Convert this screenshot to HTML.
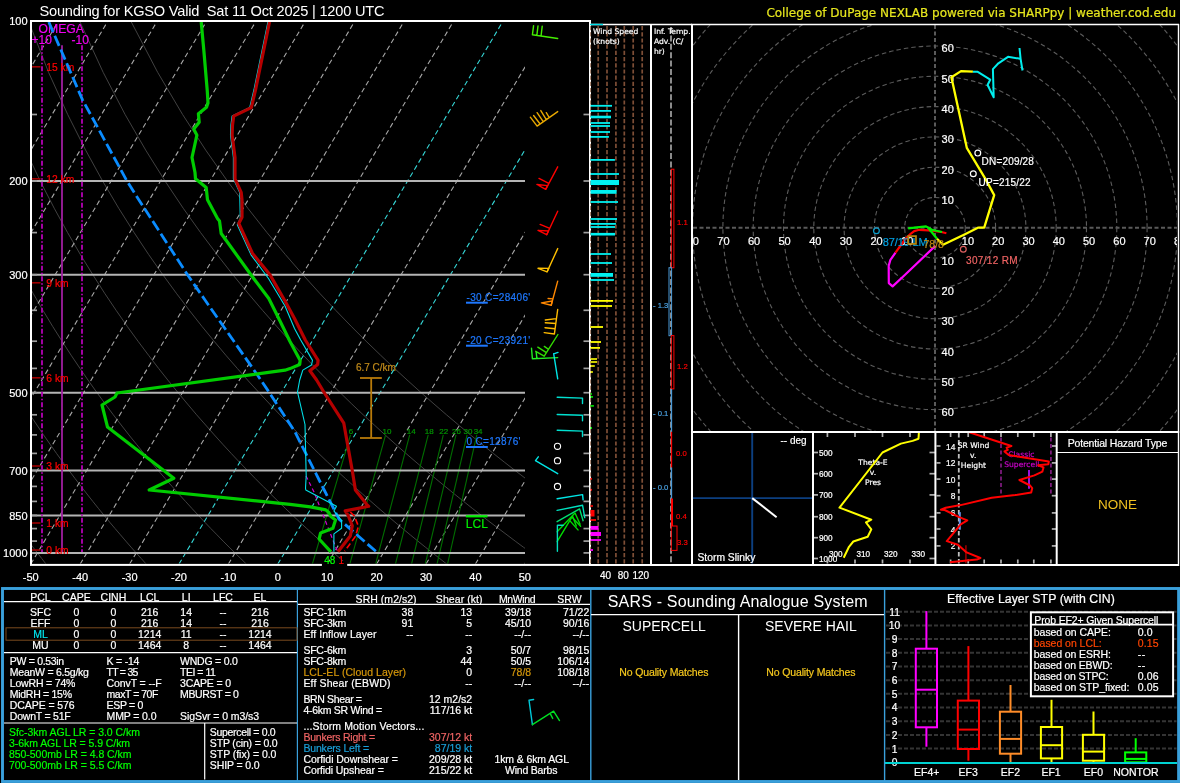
<!DOCTYPE html>
<html><head><meta charset="utf-8"><title>Sounding KGSO</title>
<style>
html,body{margin:0;padding:0;background:#000;overflow:hidden}
svg{display:block;will-change:transform}
text{font-family:"Liberation Sans",sans-serif;white-space:pre;stroke-width:0.2px}
text.dj{font-family:"DejaVu Sans",sans-serif}
</style></head><body>
<svg width="1180" height="783" viewBox="0 0 1180 783">
<rect x="0" y="0" width="1180" height="783" fill="#000"/>
<defs><clipPath id="cpS"><rect x="32" y="22" width="493" height="541.5"/></clipPath></defs>
<g clip-path="url(#cpS)">
<polyline points="46.1,564.2 41.8,558.6 37.4,552.9 32.9,547.1 28.4,541.1 23.8,534.9 19.2,528.6 14.5,522.1 9.8,515.4 4.9,508.5 0.1,501.4 -4.9,494 -9.9,486.4 -15,478.6 -20.2,470.5 -25.5,462.1 -30.9,453.4 -36.3,444.3 -41.9,434.9 -47.5,425 -53.2,414.8 -59.1,404 -65.1,392.7 -71.1,380.9 -77.3,368.4 -83.7,355.2 -90.1,341.2 -96.7,326.3 -103.5,310.3 -110.3,293.2 -117.4,274.7 -124.6,254.6 -131.9,232.6 -139.4,208.2 -146.9,181 -154.6,150.1 -162.2,114.5 -169.5,72.4 -176.3,20.8" fill="none" stroke="#484848" stroke-width="0.9" />
<polyline points="146.3,564.2 141.3,558.6 136.2,552.9 131,547.1 125.8,541.1 120.5,534.9 115.1,528.6 109.6,522.1 104.1,515.4 98.5,508.5 92.8,501.4 87,494 81.1,486.4 75.1,478.6 69,470.5 62.8,462.1 56.5,453.4 50.1,444.3 43.5,434.9 36.9,425 30,414.8 23.1,404 16,392.7 8.7,380.9 1.3,368.4 -6.3,355.2 -14.1,341.2 -22.1,326.3 -30.3,310.3 -38.7,293.2 -47.3,274.7 -56.2,254.6 -65.4,232.6 -74.8,208.2 -84.5,181 -94.5,150.1 -104.7,114.5 -115,72.4 -125.2,20.8" fill="none" stroke="#484848" stroke-width="0.9" />
<polyline points="246.5,564.2 240.8,558.6 235,552.9 229.1,547.1 223.1,541.1 217.1,534.9 210.9,528.6 204.7,522.1 198.4,515.4 192,508.5 185.5,501.4 178.8,494 172.1,486.4 165.2,478.6 158.2,470.5 151.1,462.1 143.9,453.4 136.5,444.3 128.9,434.9 121.2,425 113.3,414.8 105.3,404 97,392.7 88.6,380.9 80,368.4 71.1,355.2 62,341.2 52.6,326.3 42.9,310.3 33,293.2 22.7,274.7 12.1,254.6 1.1,232.6 -10.3,208.2 -22.2,181 -34.5,150.1 -47.2,114.5 -60.4,72.4 -74,20.8" fill="none" stroke="#484848" stroke-width="0.9" />
<polyline points="346.7,564.2 340.3,558.6 333.8,552.9 327.2,547.1 320.5,541.1 313.7,534.9 306.8,528.6 299.8,522.1 292.7,515.4 285.5,508.5 278.2,501.4 270.7,494 263.1,486.4 255.3,478.6 247.5,470.5 239.4,462.1 231.2,453.4 222.8,444.3 214.3,434.9 205.6,425 196.6,414.8 187.5,404 178.1,392.7 168.5,380.9 158.6,368.4 148.5,355.2 138,341.2 127.2,326.3 116.1,310.3 104.6,293.2 92.8,274.7 80.4,254.6 67.6,232.6 54.2,208.2 40.2,181 25.6,150.1 10.2,114.5 -5.9,72.4 -22.8,20.8" fill="none" stroke="#484848" stroke-width="0.9" />
<polyline points="446.9,564.2 439.8,558.6 432.6,552.9 425.3,547.1 417.9,541.1 410.3,534.9 402.7,528.6 394.9,522.1 387,515.4 379,508.5 370.9,501.4 362.5,494 354.1,486.4 345.5,478.6 336.7,470.5 327.7,462.1 318.6,453.4 309.2,444.3 299.7,434.9 289.9,425 279.9,414.8 269.7,404 259.1,392.7 248.3,380.9 237.3,368.4 225.8,355.2 214.1,341.2 201.9,326.3 189.3,310.3 176.3,293.2 162.8,274.7 148.7,254.6 134.1,232.6 118.7,208.2 102.6,181 85.6,150.1 67.7,114.5 48.6,72.4 28.4,20.8" fill="none" stroke="#484848" stroke-width="0.9" />
<polyline points="547,564.2 539.3,558.6 531.4,552.9 523.3,547.1 515.2,541.1 507,534.9 498.6,528.6 490,522.1 481.4,515.4 472.5,508.5 463.6,501.4 454.4,494 445.1,486.4 435.6,478.6 425.9,470.5 416,462.1 405.9,453.4 395.6,444.3 385.1,434.9 374.3,425 363.2,414.8 351.8,404 340.2,392.7 328.2,380.9 315.9,368.4 303.2,355.2 290.1,341.2 276.6,326.3 262.5,310.3 248,293.2 232.8,274.7 217.1,254.6 200.6,232.6 183.2,208.2 165,181 145.7,150.1 125.1,114.5 103.2,72.4 79.5,20.8" fill="none" stroke="#484848" stroke-width="0.9" />
<polyline points="647.2,564.2 638.8,558.6 630.2,552.9 621.4,547.1 612.6,541.1 603.6,534.9 594.4,528.6 585.1,522.1 575.7,515.4 566,508.5 556.2,501.4 546.3,494 536.1,486.4 525.7,478.6 515.1,470.5 504.3,462.1 493.3,453.4 482,444.3 470.4,434.9 458.6,425 446.5,414.8 434,404 421.2,392.7 408.1,380.9 394.5,368.4 380.6,355.2 366.1,341.2 351.2,326.3 335.7,310.3 319.6,293.2 302.9,274.7 285.4,254.6 267,232.6 247.8,208.2 227.4,181 205.7,150.1 182.6,114.5 157.7,72.4 130.7,20.8" fill="none" stroke="#484848" stroke-width="0.9" />
<line x1="-512.7" y1="564" x2="-188.5" y2="21" stroke="#a8a8a8" stroke-width="1.1" stroke-dasharray="5 3.2"/>
<line x1="-463.3" y1="564" x2="-139.1" y2="21" stroke="#a8a8a8" stroke-width="1.1" stroke-dasharray="5 3.2"/>
<line x1="-413.9" y1="564" x2="-89.7" y2="21" stroke="#a8a8a8" stroke-width="1.1" stroke-dasharray="5 3.2"/>
<line x1="-364.5" y1="564" x2="-40.3" y2="21" stroke="#a8a8a8" stroke-width="1.1" stroke-dasharray="5 3.2"/>
<line x1="-315.1" y1="564" x2="9.1" y2="21" stroke="#a8a8a8" stroke-width="1.1" stroke-dasharray="5 3.2"/>
<line x1="-265.7" y1="564" x2="58.5" y2="21" stroke="#a8a8a8" stroke-width="1.1" stroke-dasharray="5 3.2"/>
<line x1="-216.3" y1="564" x2="107.9" y2="21" stroke="#a8a8a8" stroke-width="1.1" stroke-dasharray="5 3.2"/>
<line x1="-166.9" y1="564" x2="157.3" y2="21" stroke="#a8a8a8" stroke-width="1.1" stroke-dasharray="5 3.2"/>
<line x1="-117.5" y1="564" x2="206.7" y2="21" stroke="#a8a8a8" stroke-width="1.1" stroke-dasharray="5 3.2"/>
<line x1="-68.1" y1="564" x2="256.1" y2="21" stroke="#a8a8a8" stroke-width="1.1" stroke-dasharray="5 3.2"/>
<line x1="-18.7" y1="564" x2="305.5" y2="21" stroke="#a8a8a8" stroke-width="1.1" stroke-dasharray="5 3.2"/>
<line x1="30.8" y1="564" x2="354.9" y2="21" stroke="#a8a8a8" stroke-width="1.1" stroke-dasharray="5 3.2"/>
<line x1="80.2" y1="564" x2="404.3" y2="21" stroke="#a8a8a8" stroke-width="1.1" stroke-dasharray="5 3.2"/>
<line x1="129.6" y1="564" x2="453.7" y2="21" stroke="#a8a8a8" stroke-width="1.1" stroke-dasharray="5 3.2"/>
<line x1="179" y1="564" x2="503.1" y2="21" stroke="#35d6d6" stroke-width="1.1" stroke-dasharray="5 3.2"/>
<line x1="228.4" y1="564" x2="552.5" y2="21" stroke="#a8a8a8" stroke-width="1.1" stroke-dasharray="5 3.2"/>
<line x1="277.8" y1="564" x2="601.9" y2="21" stroke="#35d6d6" stroke-width="1.1" stroke-dasharray="5 3.2"/>
<line x1="327.2" y1="564" x2="651.3" y2="21" stroke="#a8a8a8" stroke-width="1.1" stroke-dasharray="5 3.2"/>
<line x1="376.6" y1="564" x2="700.7" y2="21" stroke="#a8a8a8" stroke-width="1.1" stroke-dasharray="5 3.2"/>
<line x1="426" y1="564" x2="750.1" y2="21" stroke="#a8a8a8" stroke-width="1.1" stroke-dasharray="5 3.2"/>
<line x1="475.4" y1="564" x2="799.5" y2="21" stroke="#a8a8a8" stroke-width="1.1" stroke-dasharray="5 3.2"/>
<line x1="524.8" y1="564" x2="848.9" y2="21" stroke="#a8a8a8" stroke-width="1.1" stroke-dasharray="5 3.2"/>
<polyline points="312.3,564.2 350.5,434.9" fill="none" stroke="#006e00" stroke-width="1.1" />
<polyline points="349.8,564.2 385.6,434.9" fill="none" stroke="#006e00" stroke-width="1.1" />
<polyline points="375.6,564.2 409.7,434.9" fill="none" stroke="#006e00" stroke-width="1.1" />
<polyline points="395.4,564.2 428.2,434.9" fill="none" stroke="#006e00" stroke-width="1.1" />
<polyline points="411.5,564.2 443.3,434.9" fill="none" stroke="#006e00" stroke-width="1.1" />
<polyline points="425.2,564.2 456,434.9" fill="none" stroke="#006e00" stroke-width="1.1" />
<polyline points="437,564.2 467.1,434.9" fill="none" stroke="#006e00" stroke-width="1.1" />
<polyline points="447.5,564.2 476.8,434.9" fill="none" stroke="#006e00" stroke-width="1.1" />
</g>
<text x="351" y="433.9" font-size="8" fill="#009600" text-anchor="middle"  stroke="#009600">6</text>
<text x="387" y="433.9" font-size="8" fill="#009600" text-anchor="middle"  stroke="#009600">10</text>
<text x="411.2" y="433.9" font-size="8" fill="#009600" text-anchor="middle"  stroke="#009600">14</text>
<text x="429.2" y="433.9" font-size="8" fill="#009600" text-anchor="middle"  stroke="#009600">18</text>
<text x="443.7" y="433.9" font-size="8" fill="#009600" text-anchor="middle"  stroke="#009600">22</text>
<text x="456.4" y="433.9" font-size="8" fill="#009600" text-anchor="middle"  stroke="#009600">26</text>
<text x="468" y="433.9" font-size="8" fill="#009600" text-anchor="middle"  stroke="#009600">30</text>
<text x="478.1" y="433.9" font-size="8" fill="#009600" text-anchor="middle"  stroke="#009600">34</text>
<line x1="31" y1="181" x2="525" y2="181" stroke="#b4b4b4" stroke-width="2" />
<line x1="31" y1="274.7" x2="525" y2="274.7" stroke="#b4b4b4" stroke-width="2" />
<line x1="31" y1="392.7" x2="525" y2="392.7" stroke="#b4b4b4" stroke-width="2" />
<line x1="31" y1="470.5" x2="525" y2="470.5" stroke="#b4b4b4" stroke-width="2" />
<line x1="31" y1="515.4" x2="525" y2="515.4" stroke="#b4b4b4" stroke-width="2" />
<line x1="31" y1="552.9" x2="525" y2="552.9" stroke="#b4b4b4" stroke-width="2" />
<line x1="31" y1="114.5" x2="37" y2="114.5" stroke="#a0a0a0" stroke-width="1.7" />
<line x1="583.5" y1="114.5" x2="589" y2="114.5" stroke="#a0a0a0" stroke-width="1.7" />
<line x1="31" y1="181" x2="37" y2="181" stroke="#a0a0a0" stroke-width="1.7" />
<line x1="583.5" y1="181" x2="589" y2="181" stroke="#a0a0a0" stroke-width="1.7" />
<line x1="31" y1="232.6" x2="37" y2="232.6" stroke="#a0a0a0" stroke-width="1.7" />
<line x1="583.5" y1="232.6" x2="589" y2="232.6" stroke="#a0a0a0" stroke-width="1.7" />
<line x1="31" y1="274.7" x2="37" y2="274.7" stroke="#a0a0a0" stroke-width="1.7" />
<line x1="583.5" y1="274.7" x2="589" y2="274.7" stroke="#a0a0a0" stroke-width="1.7" />
<line x1="31" y1="310.3" x2="37" y2="310.3" stroke="#a0a0a0" stroke-width="1.7" />
<line x1="583.5" y1="310.3" x2="589" y2="310.3" stroke="#a0a0a0" stroke-width="1.7" />
<line x1="31" y1="341.2" x2="37" y2="341.2" stroke="#a0a0a0" stroke-width="1.7" />
<line x1="583.5" y1="341.2" x2="589" y2="341.2" stroke="#a0a0a0" stroke-width="1.7" />
<line x1="31" y1="368.4" x2="37" y2="368.4" stroke="#a0a0a0" stroke-width="1.7" />
<line x1="583.5" y1="368.4" x2="589" y2="368.4" stroke="#a0a0a0" stroke-width="1.7" />
<line x1="31" y1="392.7" x2="37" y2="392.7" stroke="#a0a0a0" stroke-width="1.7" />
<line x1="583.5" y1="392.7" x2="589" y2="392.7" stroke="#a0a0a0" stroke-width="1.7" />
<line x1="31" y1="414.8" x2="37" y2="414.8" stroke="#a0a0a0" stroke-width="1.7" />
<line x1="583.5" y1="414.8" x2="589" y2="414.8" stroke="#a0a0a0" stroke-width="1.7" />
<line x1="31" y1="434.9" x2="37" y2="434.9" stroke="#a0a0a0" stroke-width="1.7" />
<line x1="583.5" y1="434.9" x2="589" y2="434.9" stroke="#a0a0a0" stroke-width="1.7" />
<line x1="31" y1="453.4" x2="37" y2="453.4" stroke="#a0a0a0" stroke-width="1.7" />
<line x1="583.5" y1="453.4" x2="589" y2="453.4" stroke="#a0a0a0" stroke-width="1.7" />
<line x1="31" y1="470.5" x2="37" y2="470.5" stroke="#a0a0a0" stroke-width="1.7" />
<line x1="583.5" y1="470.5" x2="589" y2="470.5" stroke="#a0a0a0" stroke-width="1.7" />
<line x1="31" y1="486.4" x2="37" y2="486.4" stroke="#a0a0a0" stroke-width="1.7" />
<line x1="583.5" y1="486.4" x2="589" y2="486.4" stroke="#a0a0a0" stroke-width="1.7" />
<line x1="31" y1="501.4" x2="37" y2="501.4" stroke="#a0a0a0" stroke-width="1.7" />
<line x1="583.5" y1="501.4" x2="589" y2="501.4" stroke="#a0a0a0" stroke-width="1.7" />
<line x1="31" y1="515.4" x2="37" y2="515.4" stroke="#a0a0a0" stroke-width="1.7" />
<line x1="583.5" y1="515.4" x2="589" y2="515.4" stroke="#a0a0a0" stroke-width="1.7" />
<line x1="31" y1="528.6" x2="37" y2="528.6" stroke="#a0a0a0" stroke-width="1.7" />
<line x1="583.5" y1="528.6" x2="589" y2="528.6" stroke="#a0a0a0" stroke-width="1.7" />
<line x1="31" y1="541.1" x2="37" y2="541.1" stroke="#a0a0a0" stroke-width="1.7" />
<line x1="583.5" y1="541.1" x2="589" y2="541.1" stroke="#a0a0a0" stroke-width="1.7" />
<line x1="31" y1="552.9" x2="37" y2="552.9" stroke="#a0a0a0" stroke-width="1.7" />
<line x1="583.5" y1="552.9" x2="589" y2="552.9" stroke="#a0a0a0" stroke-width="1.7" />
<text x="38.5" y="32.9" font-size="12.2" fill="#f000f0"  stroke="#f000f0">OMEGA</text>
<text x="31.5" y="44" font-size="12" fill="#f000f0"  stroke="#f000f0">+10</text>
<text x="71.5" y="44" font-size="12" fill="#f000f0"  stroke="#f000f0">-10</text>
<line x1="42" y1="45.3" x2="42" y2="552" stroke="#b400b4" stroke-width="1.8" stroke-dasharray="5 2 1.5 2"/>
<line x1="82" y1="45.3" x2="82" y2="552" stroke="#b400b4" stroke-width="1.8" stroke-dasharray="5 2 1.5 2"/>
<line x1="62" y1="45.3" x2="62" y2="552" stroke="#a01ea0" stroke-width="1.8" />
<line x1="31" y1="550" x2="40.5" y2="550" stroke="#a00000" stroke-width="1.6" />
<text x="46.3" y="553.7" font-size="10.3" fill="#ff0000"  stroke="#ff0000">0 km</text>
<line x1="31" y1="523" x2="40.5" y2="523" stroke="#a00000" stroke-width="1.6" />
<text x="46.3" y="526.7" font-size="10.3" fill="#ff0000"  stroke="#ff0000">1 km</text>
<line x1="31" y1="466" x2="40.5" y2="466" stroke="#a00000" stroke-width="1.6" />
<text x="46.3" y="469.7" font-size="10.3" fill="#ff0000"  stroke="#ff0000">3 km</text>
<line x1="31" y1="377.8" x2="40.5" y2="377.8" stroke="#a00000" stroke-width="1.6" />
<text x="46.3" y="381.5" font-size="10.3" fill="#ff0000"  stroke="#ff0000">6 km</text>
<line x1="31" y1="282.8" x2="40.5" y2="282.8" stroke="#a00000" stroke-width="1.6" />
<text x="46.3" y="286.5" font-size="10.3" fill="#ff0000"  stroke="#ff0000">9 km</text>
<line x1="31" y1="178.8" x2="40.5" y2="178.8" stroke="#a00000" stroke-width="1.6" />
<text x="46.3" y="182.5" font-size="10.3" fill="#ff0000"  stroke="#ff0000">12 km</text>
<line x1="31" y1="66.8" x2="40.5" y2="66.8" stroke="#a00000" stroke-width="1.6" />
<text x="46.3" y="70.5" font-size="10.3" fill="#ff0000"  stroke="#ff0000">15 km</text>
<polyline points="48.8,22 82.4,99.6 126.4,180 135,193.8 187.5,274.8 205,300 257.4,375 268.8,391.8 295,432 324.2,490 339,519.1 375.8,551.3" fill="none" stroke="#0a8cff" stroke-width="2.8" stroke-dasharray="11 4"/>
<polyline points="306,476 314,492 337,550.3" fill="none" stroke="#d000d0" stroke-width="1.2" stroke-dasharray="4 3"/>
<polyline points="267.9,22 253.9,90 249.7,107.6 232.1,116.1 230.9,125 230.5,135.2 233.4,157.5 233.4,178.8 239.7,192.5 240.3,218.5 237.3,224.8 251,254.8 268.5,278.5 285,306 294.5,328.5 300.7,340 312.5,360.4 311.5,365 302.8,370.1 299.7,380 297.5,392 305,424.5 306.2,475.8 305.5,488.2 305.8,490 336.5,506.3 333.9,510.9 341.6,520.6 341.6,528.3 333.9,533.9 333.9,551.8" fill="none" stroke="#00e0e8" stroke-width="1.1" stroke-linejoin="round"/>
<polyline points="201.2,22 203.8,50 207.2,90 208,103 206.5,107.3 198.4,113.8 199.2,122.2 193.8,129.1 196.9,135.2 192,157.5 195,172.5 195.5,178.8 206.2,187.5 207.5,199.8 217.5,218.5 219.5,221 221.2,233.5 250,273.5 268.8,298.5 280,321 290,341.5 300.2,360.4 299.7,364.5 290,368.6 285,370.2 117,393 115,397 102,405 107.5,427 173.8,478.2 149.2,490 290,504.3 310.4,506.9 325.8,509.9 328.8,512.5 330.9,516.6 335.5,520.1 332.9,528.3 320.6,532.9 319.1,539 330.9,551.8" fill="none" stroke="#00cc00" stroke-width="3.2" stroke-linejoin="round"/>
<polyline points="350.3,512 354.4,516 358.4,526.3 355.4,536.5 344.6,551.3" fill="none" stroke="#ff0000" stroke-width="1.6" stroke-dasharray="6 3"/>
<polyline points="269.5,22 255.5,90 251.3,107.6 233.7,116.1 232.5,125 232.1,135.2 235,157.5 235,178.8 241.2,192.5 242,200 242,217.2 238.8,223.5 252.5,253.5 270,274.8 285,301 294.5,318.5 305.3,340 318.1,360.4 317.6,364.5 309.9,370.7 316.6,380 323.8,392 343.8,423.2 352.5,472 355.4,490 366.6,504.3 368.7,506.3 345.2,510.9 348.2,515.5 352.3,525.8 350.3,536 338,551.8" fill="none" stroke="#b40000" stroke-width="3.2" stroke-linejoin="round"/>
<line x1="371.2" y1="378" x2="371.2" y2="438" stroke="#b87a0a" stroke-width="1.8" />
<line x1="360" y1="378" x2="381.8" y2="378" stroke="#b87a0a" stroke-width="1.8" />
<line x1="360" y1="438" x2="381.8" y2="438" stroke="#b87a0a" stroke-width="1.8" />
<text x="355.9" y="370.6" font-size="10" fill="#c08a1a"  stroke="#c08a1a">6.7 C/km</text>
<text x="466.5" y="301" font-size="10" fill="#1e78ff"  textLength="63.7" lengthAdjust="spacing" stroke="#1e78ff">-30 C=28406'</text>
<line x1="466" y1="302.7" x2="487.8" y2="302.7" stroke="#1e78ff" stroke-width="2" />
<text x="466.5" y="344" font-size="10" fill="#1e78ff"  textLength="63.7" lengthAdjust="spacing" stroke="#1e78ff">-20 C=23921'</text>
<line x1="466" y1="345.7" x2="487.8" y2="345.7" stroke="#1e78ff" stroke-width="2" />
<text x="466.5" y="445.3" font-size="10" fill="#1e78ff"  textLength="54" lengthAdjust="spacing" stroke="#1e78ff">0 C=12876'</text>
<line x1="466" y1="447" x2="487.8" y2="447" stroke="#1e78ff" stroke-width="2" />
<line x1="465.8" y1="516.3" x2="487.5" y2="516.3" stroke="#00ee00" stroke-width="2.2" />
<text x="465.8" y="528" font-size="12" fill="#00ee00"  stroke="#00ee00">LCL</text>
<rect x="31" y="21" width="559" height="543.9" fill="none" stroke="#fff" stroke-width="2" />
<rect x="321.9" y="561" width="25.3" height="8" fill="#000" stroke="none" stroke-width="1" />
<text x="324.2" y="564" font-size="10" fill="#00ff00"  stroke="#00ff00">48</text>
<text x="338.6" y="564" font-size="10" fill="#ff0000"  stroke="#ff0000">1</text>
<text x="27.6" y="24.6" font-size="11" fill="#fff" text-anchor="end"  stroke="#fff">100</text>
<text x="27.6" y="185.1" font-size="11" fill="#fff" text-anchor="end"  stroke="#fff">200</text>
<text x="27.6" y="278.8" font-size="11" fill="#fff" text-anchor="end"  stroke="#fff">300</text>
<text x="27.6" y="396.8" font-size="11" fill="#fff" text-anchor="end"  stroke="#fff">500</text>
<text x="27.6" y="474.6" font-size="11" fill="#fff" text-anchor="end"  stroke="#fff">700</text>
<text x="27.6" y="519.5" font-size="11" fill="#fff" text-anchor="end"  stroke="#fff">850</text>
<text x="27.6" y="557" font-size="11" fill="#fff" text-anchor="end"  stroke="#fff">1000</text>
<text x="30.8" y="581.2" font-size="11" fill="#fff" text-anchor="middle"  stroke="#fff">-50</text>
<text x="80.2" y="581.2" font-size="11" fill="#fff" text-anchor="middle"  stroke="#fff">-40</text>
<text x="129.6" y="581.2" font-size="11" fill="#fff" text-anchor="middle"  stroke="#fff">-30</text>
<text x="179" y="581.2" font-size="11" fill="#fff" text-anchor="middle"  stroke="#fff">-20</text>
<text x="228.4" y="581.2" font-size="11" fill="#fff" text-anchor="middle"  stroke="#fff">-10</text>
<text x="277.8" y="581.2" font-size="11" fill="#fff" text-anchor="middle"  stroke="#fff">0</text>
<text x="327.2" y="581.2" font-size="11" fill="#fff" text-anchor="middle"  stroke="#fff">10</text>
<text x="376.6" y="581.2" font-size="11" fill="#fff" text-anchor="middle"  stroke="#fff">20</text>
<text x="426" y="581.2" font-size="11" fill="#fff" text-anchor="middle"  stroke="#fff">30</text>
<text x="475.4" y="581.2" font-size="11" fill="#fff" text-anchor="middle"  stroke="#fff">40</text>
<text x="524.8" y="581.2" font-size="11" fill="#fff" text-anchor="middle"  stroke="#fff">50</text>
<text x="39.5" y="15.6" font-size="14.6" fill="#fff"  textLength="345" lengthAdjust="spacing">Sounding for KGSO Valid  Sat 11 Oct 2025 | 1200 UTC</text>
<text x="1176" y="17" font-size="12" fill="#e6e61e" text-anchor="end" class="dj"  stroke="#e6e61e">College of DuPage NEXLAB powered via SHARPpy | weather.cod.edu</text>
<path d="M557.7 38.5L532.4 34.8 M532.4 34.8L533.6 25.6 M536.9 35.2L538 25.9 M541.1 35.7L542.2 26.3" stroke="#44ee00" stroke-width="1.4" fill="none" stroke-linecap="round"/>
<path d="M557.7 111.6L537.1 126.1 M537.1 126.1L530.3 117.2 M540.1 124L533.6 115.5 M543.2 121.7L537.1 112.7 M546.3 119.6L540.8 110.6 M549.2 117.5L546.3 112.7" stroke="#e8a800" stroke-width="1.4" fill="none" stroke-linecap="round"/>
<path d="M557.7 166.8L545.7 189.3 M548.8 183.4L539 178.4" stroke="#ff0000" stroke-width="1.4" fill="none" stroke-linecap="round"/>
<polygon points="545.7,189.3 536.9,184.5 547.6,185.6" fill="none" stroke="#ff0000" stroke-width="1.4" stroke-linejoin="round"/>
<path d="M557.7 211.2L546.7 234.7 M549.8 228.3L540.1 224.4" stroke="#ff0000" stroke-width="1.4" fill="none" stroke-linecap="round"/>
<polygon points="546.7,234.7 538,230.4 548.5,231" fill="none" stroke="#ff0000" stroke-width="1.4" stroke-linejoin="round"/>
<path d="M557.7 248.6L547.1 271.8" stroke="#ffc000" stroke-width="1.4" fill="none" stroke-linecap="round"/>
<polygon points="547.1,271.8 538,268.3 548.8,268.4" fill="none" stroke="#ffc000" stroke-width="1.4" stroke-linejoin="round"/>
<path d="M557.7 281.1L551.2 305.2 M553 298.9L548.1 298.5" stroke="#ff8800" stroke-width="1.4" fill="none" stroke-linecap="round"/>
<polygon points="551.2,305.2 541.4,302.9 552.3,301" fill="none" stroke="#ff8800" stroke-width="1.4" stroke-linejoin="round"/>
<path d="M557.7 309.5L554.4 334 M554.4 334L544.2 332.6 M555.1 328.8L545 327.7 M555.8 323.5L545.3 322.8 M556.2 318.6L545.3 320" stroke="#ffbb00" stroke-width="1.4" fill="none" stroke-linecap="round"/>
<path d="M557.9 334.5L544.2 356.2 M544.2 356.2L535.7 351.3 M546.4 352.7L537.8 347.2 M548.5 349.3L544.3 346.4" stroke="#33dd00" stroke-width="1.4" fill="none" stroke-linecap="round"/>
<path d="M557.7 357.6L532.4 358.7 M532.4 358.7L531.5 348.2 M536.9 358.4L536.2 352.4" stroke="#22ee22" stroke-width="1.4" fill="none" stroke-linecap="round"/>
<path d="M557.7 378.8L553.7 353.8 M553.7 353.8L558 352.4" stroke="#00e5e5" stroke-width="1.4" fill="none" stroke-linecap="round"/>
<path d="M557.2 397.3L582.5 398.1 M582.5 398.1L582.5 403.5" stroke="#00e0d0" stroke-width="1.4" fill="none" stroke-linecap="round"/>
<path d="M557.2 414.5L582.5 415.3 M582.5 415.3L582.5 420.7" stroke="#00e0d0" stroke-width="1.4" fill="none" stroke-linecap="round"/>
<path d="M557.2 430.3L582.5 431.1 M582.5 431.1L582.5 436.5" stroke="#00e0d0" stroke-width="1.4" fill="none" stroke-linecap="round"/>
<path d="M557.7 473.7L535.5 460.7 M535.5 460.7L538.3 456.8" stroke="#00e5e5" stroke-width="1.4" fill="none" stroke-linecap="round"/>
<path d="M557.1 498.7L582.6 494.6 M582.6 494.6L583.1 499.9" stroke="#00e5e5" stroke-width="1.4" fill="none" stroke-linecap="round"/>
<path d="M557.1 510.4L582.6 505.3 M582.6 505.3L584.7 517.6" stroke="#00e0c0" stroke-width="1.4" fill="none" stroke-linecap="round"/>
<path d="M557.1 521.7L579.6 508.9 M579.6 508.9L583.1 520.7" stroke="#00e070" stroke-width="1.4" fill="none" stroke-linecap="round"/>
<path d="M557.1 531.7L575 513 M575 513L580.1 524.2 M572.4 515.8L576.3 526" stroke="#00dd00" stroke-width="1.4" fill="none" stroke-linecap="round"/>
<path d="M557.1 541.6L571.9 517.1 M571.9 517.1L580.6 526.3 M569.8 520.6L578 529.9" stroke="#00dd00" stroke-width="1.4" fill="none" stroke-linecap="round"/>
<path d="M557.4 551.3L557.4 525.3 M557.4 525.3L563.2 525.3" stroke="#00e0c0" stroke-width="1.4" fill="none" stroke-linecap="round"/>
<circle cx="557.5" cy="446.3" r="3.1" fill="none" stroke="#fff" stroke-width="1.1"/>
<circle cx="557.5" cy="460.7" r="3.1" fill="none" stroke="#fff" stroke-width="1.1"/>
<circle cx="557.5" cy="486.5" r="3.1" fill="none" stroke="#fff" stroke-width="1.1"/>
<line x1="598.2" y1="26" x2="598.2" y2="564" stroke="#7d4e36" stroke-width="1.7" stroke-dasharray="4.2 2"/>
<line x1="607" y1="26" x2="607" y2="564" stroke="#7d4e36" stroke-width="1.7" stroke-dasharray="4.2 2"/>
<line x1="615.9" y1="26" x2="615.9" y2="564" stroke="#7d4e36" stroke-width="1.7" stroke-dasharray="4.2 2"/>
<line x1="624.3" y1="26" x2="624.3" y2="564" stroke="#7d4e36" stroke-width="1.7" stroke-dasharray="4.2 2"/>
<line x1="633.2" y1="26" x2="633.2" y2="564" stroke="#7d4e36" stroke-width="1.7" stroke-dasharray="4.2 2"/>
<line x1="642.2" y1="26" x2="642.2" y2="564" stroke="#7d4e36" stroke-width="1.7" stroke-dasharray="4.2 2"/>
<line x1="590.6" y1="26" x2="590.6" y2="564" stroke="#8a5a40" stroke-width="0.8" stroke-dasharray="4.2 2"/>
<rect x="590.5" y="104.9" width="21.5" height="1.8" fill="#00f0f0" stroke="none" stroke-width="1" />
<rect x="590.5" y="110" width="20.5" height="1.8" fill="#00f0f0" stroke="none" stroke-width="1" />
<rect x="590.5" y="115.7" width="20.5" height="2.6" fill="#00f0f0" stroke="none" stroke-width="1" />
<rect x="590.5" y="122.1" width="19.5" height="1.8" fill="#00f0f0" stroke="none" stroke-width="1" />
<rect x="590.5" y="125.1" width="19.5" height="1.8" fill="#00f0f0" stroke="none" stroke-width="1" />
<rect x="590.5" y="131.1" width="19.5" height="1.8" fill="#00f0f0" stroke="none" stroke-width="1" />
<rect x="590.5" y="136" width="18.4" height="1.8" fill="#00f0f0" stroke="none" stroke-width="1" />
<rect x="590.5" y="159" width="24.4" height="1.8" fill="#00f0f0" stroke="none" stroke-width="1" />
<rect x="590.5" y="173.1" width="28.5" height="1.8" fill="#00f0f0" stroke="none" stroke-width="1" />
<rect x="590.5" y="180" width="28.5" height="5" fill="#00f0f0" stroke="none" stroke-width="1" />
<rect x="590.5" y="190" width="26.1" height="3.8" fill="#00f0f0" stroke="none" stroke-width="1" />
<rect x="590.5" y="201.1" width="27.5" height="1.8" fill="#00f0f0" stroke="none" stroke-width="1" />
<rect x="590.5" y="218.1" width="26.5" height="1.8" fill="#00f0f0" stroke="none" stroke-width="1" />
<rect x="590.5" y="223" width="25.4" height="1.8" fill="#00f0f0" stroke="none" stroke-width="1" />
<rect x="590.5" y="226.1" width="24.5" height="1.8" fill="#00f0f0" stroke="none" stroke-width="1" />
<rect x="590.5" y="232.9" width="24.5" height="2.6" fill="#00f0f0" stroke="none" stroke-width="1" />
<rect x="590.5" y="253.1" width="20.5" height="1.8" fill="#00f0f0" stroke="none" stroke-width="1" />
<rect x="590.5" y="262.1" width="21.5" height="1.8" fill="#00f0f0" stroke="none" stroke-width="1" />
<rect x="590.5" y="273" width="22.5" height="3.8" fill="#00f0f0" stroke="none" stroke-width="1" />
<rect x="590.5" y="279.1" width="23.5" height="1.8" fill="#00f0f0" stroke="none" stroke-width="1" />
<rect x="590.5" y="300" width="22.5" height="1.8" fill="#ffff00" stroke="none" stroke-width="1" />
<rect x="590.5" y="305.1" width="21.5" height="1.8" fill="#ffff00" stroke="none" stroke-width="1" />
<rect x="590.5" y="326.1" width="12.5" height="1.8" fill="#ffff00" stroke="none" stroke-width="1" />
<rect x="590.5" y="341.1" width="10.5" height="1.8" fill="#ffff00" stroke="none" stroke-width="1" />
<rect x="590.5" y="347" width="9.5" height="1.8" fill="#ffff00" stroke="none" stroke-width="1" />
<rect x="590.5" y="358.2" width="6.5" height="1.6" fill="#ffff00" stroke="none" stroke-width="1" />
<rect x="590.5" y="361.2" width="6.5" height="1.6" fill="#ffff00" stroke="none" stroke-width="1" />
<rect x="590.5" y="365.2" width="4.3" height="1.6" fill="#ffff00" stroke="none" stroke-width="1" />
<rect x="590.5" y="371.2" width="2.4" height="1.6" fill="#ffff00" stroke="none" stroke-width="1" />
<rect x="590.5" y="393.2" width="1.5" height="1.6" fill="#00ee00" stroke="none" stroke-width="1" />
<rect x="590.5" y="396.1" width="2.5" height="1.6" fill="#00ee00" stroke="none" stroke-width="1" />
<rect x="590.5" y="405.1" width="3.4" height="1.6" fill="#00ee00" stroke="none" stroke-width="1" />
<rect x="590.5" y="427.1" width="1.5" height="1.8" fill="#00ee00" stroke="none" stroke-width="1" />
<rect x="590.5" y="477.9" width="1.5" height="1.8" fill="#ff0000" stroke="none" stroke-width="1" />
<rect x="590.5" y="488.9" width="1.5" height="1.8" fill="#ff0000" stroke="none" stroke-width="1" />
<rect x="590.5" y="505.2" width="2.5" height="1.6" fill="#ff0000" stroke="none" stroke-width="1" />
<rect x="590.5" y="510" width="4" height="6.5" fill="#ff0000" stroke="none" stroke-width="1" />
<rect x="590.5" y="519.1" width="5.5" height="1.8" fill="#ff0000" stroke="none" stroke-width="1" />
<rect x="590.5" y="526" width="8" height="3.8" fill="#ff00ff" stroke="none" stroke-width="1" />
<rect x="590.5" y="532" width="10.5" height="4" fill="#ff00ff" stroke="none" stroke-width="1" />
<rect x="590.5" y="539.1" width="10.5" height="1.8" fill="#ff00ff" stroke="none" stroke-width="1" />
<rect x="590.5" y="549.1" width="2.5" height="1.8" fill="#ff00ff" stroke="none" stroke-width="1" />
<text x="593" y="33.8" font-size="7.6" fill="#fff" class="dj"  stroke="#fff">Wind Speed</text>
<text x="593" y="43.8" font-size="7.6" fill="#fff" class="dj"  stroke="#fff">(knots)</text>
<text x="605.5" y="578.5" font-size="10" fill="#fff" text-anchor="middle"  stroke="#fff">40</text>
<text x="623.2" y="578.5" font-size="10" fill="#fff" text-anchor="middle"  stroke="#fff">80</text>
<text x="640.8" y="578.5" font-size="10" fill="#fff" text-anchor="middle"  stroke="#fff">120</text>
<line x1="590" y1="24.5" x2="692" y2="24.5" stroke="#fff" stroke-width="1.3" />
<line x1="590" y1="24.5" x2="603" y2="24.5" stroke="#00e0e8" stroke-width="1.4" />
<line x1="651" y1="24" x2="651" y2="565" stroke="#fff" stroke-width="2" />
<line x1="589" y1="564.9" x2="692" y2="564.9" stroke="#fff" stroke-width="2" />
<line x1="671" y1="27" x2="671" y2="564" stroke="#9a9a9a" stroke-width="1.8" stroke-dasharray="6 2.4"/>
<text x="653.9" y="33.8" font-size="7.6" fill="#fff" class="dj"  stroke="#fff">Inf. Temp.</text>
<text x="653.9" y="43.8" font-size="7.6" fill="#fff" class="dj"  stroke="#fff">Adv. (C/</text>
<text x="653.9" y="53.7" font-size="7.6" fill="#fff" class="dj"  stroke="#fff">hr)</text>
<rect x="671.3" y="169.2" width="2.6" height="98.5" fill="none" stroke="#ff0000" stroke-width="1" />
<text x="677" y="225" font-size="7.7" fill="#ff0000"  stroke="#ff0000">1.1</text>
<rect x="669" y="267.7" width="2.6" height="68" fill="none" stroke="#4a9ad8" stroke-width="1" />
<text x="653" y="307.5" font-size="7.7" fill="#4aa0e0"  stroke="#4aa0e0">- 1.3</text>
<rect x="671.3" y="335.6" width="2.6" height="53.3" fill="none" stroke="#ff0000" stroke-width="1" />
<text x="677" y="369" font-size="7.7" fill="#ff0000"  stroke="#ff0000">1.2</text>
<line x1="671.5" y1="389" x2="671.5" y2="431.8" stroke="#4a9ad8" stroke-width="1.3" />
<text x="653" y="416.3" font-size="7.7" fill="#4aa0e0"  stroke="#4aa0e0">- 0.1</text>
<line x1="671.5" y1="431.8" x2="671.5" y2="467.6" stroke="#ff0000" stroke-width="1.3" />
<text x="676" y="455.7" font-size="7.7" fill="#ff0000"  stroke="#ff0000">0.0</text>
<line x1="671.5" y1="467.6" x2="671.5" y2="498.5" stroke="#4a9ad8" stroke-width="1.3" />
<text x="653" y="489.8" font-size="7.7" fill="#4aa0e0"  stroke="#4aa0e0">- 0.0</text>
<line x1="672" y1="498.5" x2="672" y2="526" stroke="#ff0000" stroke-width="2" />
<text x="676" y="518.8" font-size="7.7" fill="#ff0000"  stroke="#ff0000">0.4</text>
<rect x="671.3" y="526" width="5.7" height="24.4" fill="none" stroke="#ff0000" stroke-width="1" />
<text x="677" y="544.5" font-size="7.7" fill="#ff0000"  stroke="#ff0000">3.3</text>
<defs><clipPath id="cpH"><rect x="693" y="25" width="484" height="406"/></clipPath></defs>
<g clip-path="url(#cpH)">
<circle cx="935" cy="227.8" r="30.3" fill="none" stroke="#5c5c5c" stroke-width="1.1" stroke-dasharray="4.5 3"/>
<circle cx="935" cy="227.8" r="60.6" fill="none" stroke="#5c5c5c" stroke-width="1.1" stroke-dasharray="4.5 3"/>
<circle cx="935" cy="227.8" r="90.9" fill="none" stroke="#5c5c5c" stroke-width="1.1" stroke-dasharray="4.5 3"/>
<circle cx="935" cy="227.8" r="121.2" fill="none" stroke="#5c5c5c" stroke-width="1.1" stroke-dasharray="4.5 3"/>
<circle cx="935" cy="227.8" r="151.5" fill="none" stroke="#5c5c5c" stroke-width="1.1" stroke-dasharray="4.5 3"/>
<circle cx="935" cy="227.8" r="181.8" fill="none" stroke="#5c5c5c" stroke-width="1.1" stroke-dasharray="4.5 3"/>
<circle cx="935" cy="227.8" r="212.1" fill="none" stroke="#5c5c5c" stroke-width="1.1" stroke-dasharray="4.5 3"/>
<circle cx="935" cy="227.8" r="242.4" fill="none" stroke="#5c5c5c" stroke-width="1.1" stroke-dasharray="4.5 3"/>
<circle cx="935" cy="227.8" r="272.7" fill="none" stroke="#5c5c5c" stroke-width="1.1" stroke-dasharray="4.5 3"/>
<circle cx="935" cy="227.8" r="303" fill="none" stroke="#5c5c5c" stroke-width="1.1" stroke-dasharray="4.5 3"/>
<circle cx="935" cy="227.8" r="333.3" fill="none" stroke="#5c5c5c" stroke-width="1.1" stroke-dasharray="4.5 3"/>
<circle cx="935" cy="227.8" r="363.6" fill="none" stroke="#5c5c5c" stroke-width="1.1" stroke-dasharray="4.5 3"/>
<line x1="935" y1="25" x2="935" y2="431" stroke="#5a5a5a" stroke-width="2" stroke-dasharray="4 2.5"/>
<line x1="693" y1="227.8" x2="1177" y2="227.8" stroke="#5a5a5a" stroke-width="2" stroke-dasharray="4 2.5"/>
<text x="967.9" y="245.4" font-size="11" fill="#fff" text-anchor="middle"  stroke="#fff">10</text>
<text x="907.2" y="245.4" font-size="11" fill="#fff" text-anchor="middle"  stroke="#fff">10</text>
<text x="998.2" y="245.4" font-size="11" fill="#fff" text-anchor="middle"  stroke="#fff">20</text>
<text x="876.5" y="245.4" font-size="11" fill="#fff" text-anchor="middle"  stroke="#fff">20</text>
<text x="1028.5" y="245.4" font-size="11" fill="#fff" text-anchor="middle"  stroke="#fff">30</text>
<text x="845.9" y="245.4" font-size="11" fill="#fff" text-anchor="middle"  stroke="#fff">30</text>
<text x="1058.8" y="245.4" font-size="11" fill="#fff" text-anchor="middle"  stroke="#fff">40</text>
<text x="815.3" y="245.4" font-size="11" fill="#fff" text-anchor="middle"  stroke="#fff">40</text>
<text x="1089.1" y="245.4" font-size="11" fill="#fff" text-anchor="middle"  stroke="#fff">50</text>
<text x="784.6" y="245.4" font-size="11" fill="#fff" text-anchor="middle"  stroke="#fff">50</text>
<text x="1119.4" y="245.4" font-size="11" fill="#fff" text-anchor="middle"  stroke="#fff">60</text>
<text x="754" y="245.4" font-size="11" fill="#fff" text-anchor="middle"  stroke="#fff">60</text>
<text x="1149.7" y="245.4" font-size="11" fill="#fff" text-anchor="middle"  stroke="#fff">70</text>
<text x="723.4" y="245.4" font-size="11" fill="#fff" text-anchor="middle"  stroke="#fff">70</text>
<text x="1180" y="245.4" font-size="11" fill="#fff" text-anchor="middle"  stroke="#fff">80</text>
<text x="692.8" y="245.4" font-size="11" fill="#fff" text-anchor="middle"  stroke="#fff">80</text>
<text x="941.6" y="203.9" font-size="11" fill="#fff"  stroke="#fff">10</text>
<text x="941.6" y="264.7" font-size="11" fill="#fff"  stroke="#fff">10</text>
<text x="941.6" y="173.6" font-size="11" fill="#fff"  stroke="#fff">20</text>
<text x="941.6" y="295" font-size="11" fill="#fff"  stroke="#fff">20</text>
<text x="941.6" y="143.3" font-size="11" fill="#fff"  stroke="#fff">30</text>
<text x="941.6" y="325.3" font-size="11" fill="#fff"  stroke="#fff">30</text>
<text x="941.6" y="113" font-size="11" fill="#fff"  stroke="#fff">40</text>
<text x="941.6" y="355.6" font-size="11" fill="#fff"  stroke="#fff">40</text>
<text x="941.6" y="82.7" font-size="11" fill="#fff"  stroke="#fff">50</text>
<text x="941.6" y="385.9" font-size="11" fill="#fff"  stroke="#fff">50</text>
<text x="941.6" y="52.4" font-size="11" fill="#fff"  stroke="#fff">60</text>
<text x="941.6" y="416.2" font-size="11" fill="#fff"  stroke="#fff">60</text>
<polyline points="935.3,245.9 904.8,275 892.6,286.4 888.8,283.1 888.7,265.8 890.4,259.9 895.5,252.7" fill="none" stroke="#ff00ff" stroke-width="2.2" stroke-linejoin="round"/>
<polyline points="895.5,252.7 900.6,245.5 905,239.5 910.3,234.1 914.2,231.1 919.2,229.8 928.6,230.3 941.3,232 946.4,233.2" fill="none" stroke="#ff0000" stroke-width="2.2" stroke-linejoin="round"/>
<polyline points="908.2,228.4 926,226.4 932,229.8 942.1,232" fill="none" stroke="#00ee00" stroke-width="2.2" stroke-linejoin="round"/>
<polyline points="928.6,228.2 937,238.7" fill="none" stroke="#00ee00" stroke-width="2.2" />
<polyline points="937,238.7 943,244.7 965,234.2 977.9,227.7 984.2,227.7 994.2,195.1 985.1,178.4 966.8,147.8 951.4,77.2 961,71.1 972.9,71.7" fill="none" stroke="#ffff00" stroke-width="2.3" stroke-linejoin="round"/>
<polyline points="972.9,71.7 977.4,71.7 990.2,79.7 987.6,85 993.7,97.3 992.9,69.1 998.4,63.3 1008,56.8 1020.3,58.8" fill="none" stroke="#00eeee" stroke-width="2" stroke-linejoin="round"/>
<polyline points="1019.5,48 1020.6,58.8 1022.5,70.5" fill="none" stroke="#00eeee" stroke-width="2" />
<circle cx="977.8" cy="153.1" r="2.9" fill="none" stroke="#fff" stroke-width="1.2"/>
<text x="981.6" y="164.9" font-size="10" fill="#fff"  textLength="52.3" lengthAdjust="spacing" stroke="#fff">DN=209/28</text>
<circle cx="973.3" cy="173.8" r="2.9" fill="none" stroke="#fff" stroke-width="1.2"/>
<text x="978.6" y="185.9" font-size="10" fill="#fff"  textLength="52" lengthAdjust="spacing" stroke="#fff">UP=215/22</text>
<circle cx="876.4" cy="230.7" r="2.9" fill="none" stroke="#0a9ac8" stroke-width="1.2"/>
<text x="882.8" y="245.5" font-size="11" fill="#00a0e0"  textLength="44.8" lengthAdjust="spacing" stroke="#00a0e0">87/19 LM</text>
<circle cx="963.3" cy="249.3" r="2.9" fill="none" stroke="#e06060" stroke-width="1.2"/>
<text x="966" y="263.5" font-size="10" fill="#f06464"  textLength="51.7" lengthAdjust="spacing" stroke="#f06464">307/12 RM</text>
<text x="923.5" y="247.6" font-size="10.5" fill="#c08a10"  stroke="#c08a10">78/8</text>
<rect x="908.2" y="236.1" width="7.8" height="7.8" fill="none" stroke="#b8860b" stroke-width="1.7" />
</g>
<line x1="691" y1="24.5" x2="1179" y2="24.5" stroke="#fff" stroke-width="1.3" />
<line x1="692" y1="24" x2="692" y2="433" stroke="#fff" stroke-width="2" />
<line x1="1178.5" y1="24" x2="1178.5" y2="433" stroke="#fff" stroke-width="1.4" />
<line x1="752.2" y1="433" x2="752.2" y2="563.5" stroke="#0c3f80" stroke-width="1.9" />
<line x1="693" y1="498.1" x2="813" y2="498.1" stroke="#0c3f80" stroke-width="1.9" />
<line x1="752.2" y1="498.1" x2="776.6" y2="517.2" stroke="#fff" stroke-width="2" />
<text x="806.6" y="443.6" font-size="10" fill="#fff" text-anchor="end"  stroke="#fff">-- deg</text>
<text x="697.5" y="561.4" font-size="10.3" fill="#fff"  textLength="57.8" lengthAdjust="spacing" stroke="#fff">Storm Slinky</text>
<line x1="814" y1="452.5" x2="818" y2="452.5" stroke="#b0b0b0" stroke-width="1.7" />
<line x1="929.5" y1="452.5" x2="935" y2="452.5" stroke="#b0b0b0" stroke-width="1.7" />
<text x="819" y="455.5" font-size="8.2" fill="#fff"  stroke="#fff">500</text>
<line x1="814" y1="473.7" x2="818" y2="473.7" stroke="#b0b0b0" stroke-width="1.7" />
<line x1="929.5" y1="473.7" x2="935" y2="473.7" stroke="#b0b0b0" stroke-width="1.7" />
<text x="819" y="476.7" font-size="8.2" fill="#fff"  stroke="#fff">600</text>
<line x1="814" y1="494.9" x2="818" y2="494.9" stroke="#b0b0b0" stroke-width="1.7" />
<line x1="929.5" y1="494.9" x2="935" y2="494.9" stroke="#b0b0b0" stroke-width="1.7" />
<text x="819" y="497.9" font-size="8.2" fill="#fff"  stroke="#fff">700</text>
<line x1="814" y1="516.7" x2="818" y2="516.7" stroke="#b0b0b0" stroke-width="1.7" />
<line x1="929.5" y1="516.7" x2="935" y2="516.7" stroke="#b0b0b0" stroke-width="1.7" />
<text x="819" y="519.7" font-size="8.2" fill="#fff"  stroke="#fff">800</text>
<line x1="814" y1="537.7" x2="818" y2="537.7" stroke="#b0b0b0" stroke-width="1.7" />
<line x1="929.5" y1="537.7" x2="935" y2="537.7" stroke="#b0b0b0" stroke-width="1.7" />
<text x="819" y="540.7" font-size="8.2" fill="#fff"  stroke="#fff">900</text>
<line x1="814" y1="558.5" x2="818" y2="558.5" stroke="#b0b0b0" stroke-width="1.7" />
<line x1="929.5" y1="558.5" x2="935" y2="558.5" stroke="#b0b0b0" stroke-width="1.7" />
<text x="819" y="561.5" font-size="8.2" fill="#fff"  stroke="#fff">1000</text>
<line x1="827.4" y1="433" x2="827.4" y2="437" stroke="#b0b0b0" stroke-width="1.7" />
<line x1="827.4" y1="559.5" x2="827.4" y2="563.5" stroke="#b0b0b0" stroke-width="1.7" />
<text x="828.9" y="557.4" font-size="8.2" fill="#fff"  stroke="#fff">300</text>
<line x1="855" y1="433" x2="855" y2="437" stroke="#b0b0b0" stroke-width="1.7" />
<line x1="855" y1="559.5" x2="855" y2="563.5" stroke="#b0b0b0" stroke-width="1.7" />
<text x="856.5" y="557.4" font-size="8.2" fill="#fff"  stroke="#fff">310</text>
<line x1="882.5" y1="433" x2="882.5" y2="437" stroke="#b0b0b0" stroke-width="1.7" />
<line x1="882.5" y1="559.5" x2="882.5" y2="563.5" stroke="#b0b0b0" stroke-width="1.7" />
<text x="884" y="557.4" font-size="8.2" fill="#fff"  stroke="#fff">320</text>
<line x1="910" y1="433" x2="910" y2="437" stroke="#b0b0b0" stroke-width="1.7" />
<line x1="910" y1="559.5" x2="910" y2="563.5" stroke="#b0b0b0" stroke-width="1.7" />
<text x="911.5" y="557.4" font-size="8.2" fill="#fff"  stroke="#fff">330</text>
<text x="873" y="464.8" font-size="7.6" fill="#fff" text-anchor="middle" class="dj"  stroke="#fff">Theta-E</text>
<text x="873" y="474.8" font-size="7.6" fill="#fff" text-anchor="middle" class="dj"  stroke="#fff">v.</text>
<text x="873" y="484.7" font-size="7.6" fill="#fff" text-anchor="middle" class="dj"  stroke="#fff">Pres</text>
<polyline points="918.9,432.4 918.5,438.8 912.6,440.9 900.9,443.6 882.5,452.5 839.5,507.6 871.3,519.7 866,522.5 871.3,529.4 867.7,536.7 853.3,541.5 849,546.8 843.7,557.8" fill="none" stroke="#ffff00" stroke-width="2" stroke-linejoin="round"/>
<line x1="936.5" y1="446" x2="940.5" y2="446" stroke="#b0b0b0" stroke-width="1.7" />
<line x1="1051.8" y1="446" x2="1056" y2="446" stroke="#b0b0b0" stroke-width="1.7" />
<text x="955.3" y="449.5" font-size="8.4" fill="#fff" text-anchor="end"  stroke="#fff">14</text>
<line x1="936.5" y1="462.9" x2="940.5" y2="462.9" stroke="#b0b0b0" stroke-width="1.7" />
<line x1="1051.8" y1="462.9" x2="1056" y2="462.9" stroke="#b0b0b0" stroke-width="1.7" />
<text x="955.3" y="466.4" font-size="8.4" fill="#fff" text-anchor="end"  stroke="#fff">12</text>
<line x1="936.5" y1="479.1" x2="940.5" y2="479.1" stroke="#b0b0b0" stroke-width="1.7" />
<line x1="1051.8" y1="479.1" x2="1056" y2="479.1" stroke="#b0b0b0" stroke-width="1.7" />
<text x="955.3" y="482.6" font-size="8.4" fill="#fff" text-anchor="end"  stroke="#fff">10</text>
<line x1="936.5" y1="495.7" x2="940.5" y2="495.7" stroke="#b0b0b0" stroke-width="1.7" />
<line x1="1051.8" y1="495.7" x2="1056" y2="495.7" stroke="#b0b0b0" stroke-width="1.7" />
<text x="955.3" y="499.2" font-size="8.4" fill="#fff" text-anchor="end"  stroke="#fff">8</text>
<line x1="936.5" y1="512.9" x2="940.5" y2="512.9" stroke="#b0b0b0" stroke-width="1.7" />
<line x1="1051.8" y1="512.9" x2="1056" y2="512.9" stroke="#b0b0b0" stroke-width="1.7" />
<text x="955.3" y="516.4" font-size="8.4" fill="#fff" text-anchor="end"  stroke="#fff">6</text>
<line x1="936.5" y1="529" x2="940.5" y2="529" stroke="#b0b0b0" stroke-width="1.7" />
<line x1="1051.8" y1="529" x2="1056" y2="529" stroke="#b0b0b0" stroke-width="1.7" />
<text x="955.3" y="532.5" font-size="8.4" fill="#fff" text-anchor="end"  stroke="#fff">4</text>
<line x1="936.5" y1="545.9" x2="940.5" y2="545.9" stroke="#b0b0b0" stroke-width="1.7" />
<line x1="1051.8" y1="545.9" x2="1056" y2="545.9" stroke="#b0b0b0" stroke-width="1.7" />
<text x="955.3" y="549.4" font-size="8.4" fill="#fff" text-anchor="end"  stroke="#fff">2</text>
<line x1="950.6" y1="433" x2="950.6" y2="437" stroke="#b0b0b0" stroke-width="1.7" />
<line x1="950.6" y1="559.5" x2="950.6" y2="563.5" stroke="#b0b0b0" stroke-width="1.7" />
<line x1="968.2" y1="433" x2="968.2" y2="437" stroke="#b0b0b0" stroke-width="1.7" />
<line x1="968.2" y1="559.5" x2="968.2" y2="563.5" stroke="#b0b0b0" stroke-width="1.7" />
<line x1="984.2" y1="433" x2="984.2" y2="437" stroke="#b0b0b0" stroke-width="1.7" />
<line x1="984.2" y1="559.5" x2="984.2" y2="563.5" stroke="#b0b0b0" stroke-width="1.7" />
<line x1="1001" y1="433" x2="1001" y2="437" stroke="#b0b0b0" stroke-width="1.7" />
<line x1="1001" y1="559.5" x2="1001" y2="563.5" stroke="#b0b0b0" stroke-width="1.7" />
<line x1="1017.8" y1="433" x2="1017.8" y2="437" stroke="#b0b0b0" stroke-width="1.7" />
<line x1="1017.8" y1="559.5" x2="1017.8" y2="563.5" stroke="#b0b0b0" stroke-width="1.7" />
<line x1="1033.8" y1="433" x2="1033.8" y2="437" stroke="#b0b0b0" stroke-width="1.7" />
<line x1="1033.8" y1="559.5" x2="1033.8" y2="563.5" stroke="#b0b0b0" stroke-width="1.7" />
<line x1="1050.9" y1="433" x2="1050.9" y2="437" stroke="#b0b0b0" stroke-width="1.7" />
<line x1="1050.9" y1="559.5" x2="1050.9" y2="563.5" stroke="#b0b0b0" stroke-width="1.7" />
<line x1="958.8" y1="433" x2="958.8" y2="563.5" stroke="#c0c0c0" stroke-width="1.8" stroke-dasharray="4.5 2.5"/>
<line x1="1001" y1="437.5" x2="1001" y2="495.6" stroke="#7a1a7a" stroke-width="1.8" stroke-dasharray="4 2.5"/>
<line x1="1050.9" y1="437.5" x2="1050.9" y2="495.6" stroke="#7a1a7a" stroke-width="1.8" stroke-dasharray="4 2.5"/>
<text x="1021.3" y="456.7" font-size="7.6" fill="#c800c8" text-anchor="middle" class="dj"  stroke="#c800c8">Classic</text>
<text x="1021.8" y="466.8" font-size="7.6" fill="#c800c8" text-anchor="middle" class="dj"  stroke="#c800c8">Supercell</text>
<text x="973.5" y="447.6" font-size="7.6" fill="#fff" text-anchor="middle" class="dj"  stroke="#fff">SR Wind</text>
<text x="973.2" y="457.8" font-size="7.6" fill="#fff" text-anchor="middle" class="dj"  stroke="#fff">v.</text>
<text x="973.4" y="467.6" font-size="7.6" fill="#fff" text-anchor="middle" class="dj"  stroke="#fff">Height</text>
<line x1="1029" y1="470" x2="1029" y2="488.7" stroke="#9a10e0" stroke-width="2" />
<line x1="959.8" y1="512.1" x2="959.8" y2="529.7" stroke="#6495ed" stroke-width="2" />
<line x1="965.9" y1="545.2" x2="965.9" y2="563.3" stroke="#8b0000" stroke-width="1.7" />
<polyline points="969.2,432.3 1011.4,446 1006.6,447.6 1007.7,449.8 1004.5,451.4 1008.7,455.1 1048.8,461.5 1048.3,464.2 1038.1,465.2 1043.5,467.4 1042.4,471.6 1034.4,475.4 1019.4,480 1030.1,485.5 1032.2,488.2 1031.2,492.5 1015.2,495.1 991.7,497.7 960.7,505.1 945.7,507.8 940.9,509.7 944.7,510 958.6,516.9 967.3,520.4 960.7,524.4 946.8,541.1 958,544.7 966,552.1 980.4,558 976.7,559.6 950,562.3" fill="none" stroke="#ff0000" stroke-width="2" stroke-linejoin="round"/>
<text x="1117.5" y="446.8" font-size="10.5" fill="#fff" text-anchor="middle"  textLength="99.6" lengthAdjust="spacing" stroke="#fff">Potential Hazard Type</text>
<line x1="1057" y1="452.5" x2="1178" y2="452.5" stroke="#fff" stroke-width="1.2" />
<text x="1117.5" y="508.7" font-size="13.5" fill="#f0c020" text-anchor="middle" >NONE</text>
<line x1="691.5" y1="432" x2="1179" y2="432" stroke="#fff" stroke-width="2" />
<line x1="691.5" y1="565" x2="1179" y2="565" stroke="#fff" stroke-width="2" />
<line x1="692" y1="431" x2="692" y2="566" stroke="#fff" stroke-width="2" />
<line x1="813" y1="431" x2="813" y2="566" stroke="#fff" stroke-width="2" />
<line x1="935.4" y1="431" x2="935.4" y2="566" stroke="#fff" stroke-width="2" />
<line x1="1056.7" y1="431" x2="1056.7" y2="566" stroke="#fff" stroke-width="2" />
<line x1="1178.5" y1="431" x2="1178.5" y2="566" stroke="#fff" stroke-width="1.4" />
<rect x="2.5" y="588.5" width="1176.1" height="193" fill="none" stroke="#3aa0dc" stroke-width="2.9" />
<line x1="297.4" y1="589" x2="297.4" y2="781" stroke="#3aa0dc" stroke-width="1.2" />
<line x1="590.8" y1="589" x2="590.8" y2="781" stroke="#3aa0dc" stroke-width="1.4" />
<line x1="884.6" y1="589" x2="884.6" y2="781" stroke="#3aa0dc" stroke-width="1.4" />
<text x="40.5" y="600.8" font-size="10.5" fill="#fff" text-anchor="middle"  stroke="#fff">PCL</text>
<text x="76.4" y="600.8" font-size="10.5" fill="#fff" text-anchor="middle"  stroke="#fff">CAPE</text>
<text x="113.4" y="600.8" font-size="10.5" fill="#fff" text-anchor="middle"  stroke="#fff">CINH</text>
<text x="149.7" y="600.8" font-size="10.5" fill="#fff" text-anchor="middle"  stroke="#fff">LCL</text>
<text x="186.2" y="600.8" font-size="10.5" fill="#fff" text-anchor="middle"  stroke="#fff">LI</text>
<text x="223" y="600.8" font-size="10.5" fill="#fff" text-anchor="middle"  stroke="#fff">LFC</text>
<text x="260" y="600.8" font-size="10.5" fill="#fff" text-anchor="middle"  stroke="#fff">EL</text>
<line x1="4" y1="601.6" x2="297" y2="601.6" stroke="#fff" stroke-width="1.2" />
<text x="40.5" y="616" font-size="10.5" fill="#fff" text-anchor="middle"  stroke="#fff">SFC</text>
<text x="76.4" y="616" font-size="10.5" fill="#fff" text-anchor="middle"  stroke="#fff">0</text>
<text x="113.4" y="616" font-size="10.5" fill="#fff" text-anchor="middle"  stroke="#fff">0</text>
<text x="149.7" y="616" font-size="10.5" fill="#fff" text-anchor="middle"  stroke="#fff">216</text>
<text x="186.2" y="616" font-size="10.5" fill="#fff" text-anchor="middle"  stroke="#fff">14</text>
<text x="223" y="616" font-size="10.5" fill="#fff" text-anchor="middle"  stroke="#fff">--</text>
<text x="260" y="616" font-size="10.5" fill="#fff" text-anchor="middle"  stroke="#fff">216</text>
<text x="40.5" y="627" font-size="10.5" fill="#fff" text-anchor="middle"  stroke="#fff">EFF</text>
<text x="76.4" y="627" font-size="10.5" fill="#fff" text-anchor="middle"  stroke="#fff">0</text>
<text x="113.4" y="627" font-size="10.5" fill="#fff" text-anchor="middle"  stroke="#fff">0</text>
<text x="149.7" y="627" font-size="10.5" fill="#fff" text-anchor="middle"  stroke="#fff">216</text>
<text x="186.2" y="627" font-size="10.5" fill="#fff" text-anchor="middle"  stroke="#fff">14</text>
<text x="223" y="627" font-size="10.5" fill="#fff" text-anchor="middle"  stroke="#fff">--</text>
<text x="260" y="627" font-size="10.5" fill="#fff" text-anchor="middle"  stroke="#fff">216</text>
<text x="40.5" y="638" font-size="10.5" fill="#00e5ee" text-anchor="middle"  stroke="#00e5ee">ML</text>
<text x="76.4" y="638" font-size="10.5" fill="#fff" text-anchor="middle"  stroke="#fff">0</text>
<text x="113.4" y="638" font-size="10.5" fill="#fff" text-anchor="middle"  stroke="#fff">0</text>
<text x="149.7" y="638" font-size="10.5" fill="#fff" text-anchor="middle"  stroke="#fff">1214</text>
<text x="186.2" y="638" font-size="10.5" fill="#fff" text-anchor="middle"  stroke="#fff">11</text>
<text x="223" y="638" font-size="10.5" fill="#fff" text-anchor="middle"  stroke="#fff">--</text>
<text x="260" y="638" font-size="10.5" fill="#fff" text-anchor="middle"  stroke="#fff">1214</text>
<text x="40.5" y="649" font-size="10.5" fill="#fff" text-anchor="middle"  stroke="#fff">MU</text>
<text x="76.4" y="649" font-size="10.5" fill="#fff" text-anchor="middle"  stroke="#fff">0</text>
<text x="113.4" y="649" font-size="10.5" fill="#fff" text-anchor="middle"  stroke="#fff">0</text>
<text x="149.7" y="649" font-size="10.5" fill="#fff" text-anchor="middle"  stroke="#fff">1464</text>
<text x="186.2" y="649" font-size="10.5" fill="#fff" text-anchor="middle"  stroke="#fff">8</text>
<text x="223" y="649" font-size="10.5" fill="#fff" text-anchor="middle"  stroke="#fff">--</text>
<text x="260" y="649" font-size="10.5" fill="#fff" text-anchor="middle"  stroke="#fff">1464</text>
<rect x="6" y="627.8" width="291" height="12.4" fill="none" stroke="#7a4a1e" stroke-width="1" />
<line x1="4" y1="652.6" x2="297" y2="652.6" stroke="#fff" stroke-width="1.2" />
<text x="9.8" y="665" font-size="10.5" fill="#fff"  textLength="54.4" lengthAdjust="spacing" stroke="#fff">PW = 0.53in</text>
<text x="106.5" y="665" font-size="10.5" fill="#fff"  textLength="32.9" lengthAdjust="spacing" stroke="#fff">K = -14</text>
<text x="180" y="665" font-size="10.5" fill="#fff"  textLength="57.8" lengthAdjust="spacing" stroke="#fff">WNDG = 0.0</text>
<text x="9.8" y="676" font-size="10.5" fill="#fff"  textLength="79.1" lengthAdjust="spacing" stroke="#fff">MeanW = 6.5g/kg</text>
<text x="106.5" y="676" font-size="10.5" fill="#fff"  textLength="31.9" lengthAdjust="spacing" stroke="#fff">TT = 35</text>
<text x="180" y="676" font-size="10.5" fill="#fff"  textLength="35.8" lengthAdjust="spacing" stroke="#fff">TEI = 11</text>
<text x="9.8" y="687" font-size="10.5" fill="#fff"  textLength="65.6" lengthAdjust="spacing" stroke="#fff">LowRH = 74%</text>
<text x="106.5" y="687" font-size="10.5" fill="#fff"  textLength="55.2" lengthAdjust="spacing" stroke="#fff">ConvT = --F</text>
<text x="180" y="687" font-size="10.5" fill="#fff"  textLength="51.1" lengthAdjust="spacing" stroke="#fff">3CAPE = 0</text>
<text x="9.8" y="698" font-size="10.5" fill="#fff"  textLength="62.2" lengthAdjust="spacing" stroke="#fff">MidRH = 15%</text>
<text x="106.5" y="698" font-size="10.5" fill="#fff"  textLength="51.9" lengthAdjust="spacing" stroke="#fff">maxT = 70F</text>
<text x="180" y="698" font-size="10.5" fill="#fff"  textLength="58.9" lengthAdjust="spacing" stroke="#fff">MBURST = 0</text>
<text x="9.8" y="709" font-size="10.5" fill="#fff"  textLength="64.8" lengthAdjust="spacing" stroke="#fff">DCAPE = 576</text>
<text x="106.5" y="709" font-size="10.5" fill="#fff"  textLength="36.8" lengthAdjust="spacing" stroke="#fff">ESP = 0</text>
<text x="9.8" y="720" font-size="10.5" fill="#fff"  textLength="60.9" lengthAdjust="spacing" stroke="#fff">DownT = 51F</text>
<text x="106.5" y="720" font-size="10.5" fill="#fff"  textLength="50" lengthAdjust="spacing" stroke="#fff">MMP = 0.0</text>
<text x="180" y="720" font-size="10.5" fill="#fff"  textLength="79.1" lengthAdjust="spacing" stroke="#fff">SigSvr = 0 m3/s3</text>
<line x1="4" y1="723" x2="297" y2="723" stroke="#fff" stroke-width="1.2" />
<line x1="204.7" y1="723" x2="204.7" y2="779.5" stroke="#fff" stroke-width="1.2" />
<text x="9" y="736" font-size="10.5" fill="#00ff00"  textLength="130.9" lengthAdjust="spacing" stroke="#00ff00">Sfc-3km AGL LR = 3.0 C/km</text>
<text x="209.8" y="736" font-size="10.5" fill="#fff"  textLength="65.9" lengthAdjust="spacing" stroke="#fff">Supercell = 0.0</text>
<text x="9" y="747" font-size="10.5" fill="#00ff00"  textLength="121.1" lengthAdjust="spacing" stroke="#00ff00">3-6km AGL LR = 5.9 C/km</text>
<text x="209.8" y="747" font-size="10.5" fill="#fff"  textLength="67.9" lengthAdjust="spacing" stroke="#fff">STP (cin) = 0.0</text>
<text x="9" y="758" font-size="10.5" fill="#00ff00"  textLength="122.4" lengthAdjust="spacing" stroke="#00ff00">850-500mb LR = 4.8 C/km</text>
<text x="209.8" y="758" font-size="10.5" fill="#fff"  textLength="66.6" lengthAdjust="spacing" stroke="#fff">STP (fix) = 0.0</text>
<text x="9" y="769" font-size="10.5" fill="#00ff00"  textLength="122.4" lengthAdjust="spacing" stroke="#00ff00">700-500mb LR = 5.5 C/km</text>
<text x="209.8" y="769" font-size="10.5" fill="#fff"  textLength="49.8" lengthAdjust="spacing" stroke="#fff">SHIP = 0.0</text>
<text x="416.6" y="602.6" font-size="10.5" fill="#fff" text-anchor="end"  textLength="61" lengthAdjust="spacing" stroke="#fff">SRH (m2/s2)</text>
<text x="482.6" y="602.6" font-size="10.5" fill="#fff" text-anchor="end"  textLength="46.8" lengthAdjust="spacing" stroke="#fff">Shear (kt)</text>
<text x="535.7" y="602.6" font-size="10.5" fill="#fff" text-anchor="end"  textLength="36.8" lengthAdjust="spacing" stroke="#fff">MnWind</text>
<text x="581.6" y="602.6" font-size="10.5" fill="#fff" text-anchor="end"  stroke="#fff">SRW</text>
<line x1="298" y1="604.3" x2="590" y2="604.3" stroke="#fff" stroke-width="1.2" />
<text x="303.4" y="616" font-size="10.5" fill="#fff"  textLength="42.8" lengthAdjust="spacing" stroke="#fff">SFC-1km</text>
<text x="413.3" y="616" font-size="10.5" fill="#fff" text-anchor="end"  stroke="#fff">38</text>
<text x="472.2" y="616" font-size="10.5" fill="#fff" text-anchor="end"  stroke="#fff">13</text>
<text x="531.2" y="616" font-size="10.5" fill="#fff" text-anchor="end"  stroke="#fff">39/18</text>
<text x="589.3" y="616" font-size="10.5" fill="#fff" text-anchor="end"  stroke="#fff">71/22</text>
<text x="303.4" y="627" font-size="10.5" fill="#fff"  textLength="42.8" lengthAdjust="spacing" stroke="#fff">SFC-3km</text>
<text x="413.3" y="627" font-size="10.5" fill="#fff" text-anchor="end"  stroke="#fff">91</text>
<text x="472.2" y="627" font-size="10.5" fill="#fff" text-anchor="end"  stroke="#fff">5</text>
<text x="531.2" y="627" font-size="10.5" fill="#fff" text-anchor="end"  stroke="#fff">45/10</text>
<text x="589.3" y="627" font-size="10.5" fill="#fff" text-anchor="end"  stroke="#fff">90/16</text>
<text x="303.4" y="638" font-size="10.5" fill="#fff"  textLength="73" lengthAdjust="spacing" stroke="#fff">Eff Inflow Layer</text>
<text x="413.3" y="638" font-size="10.5" fill="#fff" text-anchor="end"  stroke="#fff">--</text>
<text x="472.2" y="638" font-size="10.5" fill="#fff" text-anchor="end"  stroke="#fff">--</text>
<text x="531.2" y="638" font-size="10.5" fill="#fff" text-anchor="end"  stroke="#fff">--/--</text>
<text x="589.3" y="638" font-size="10.5" fill="#fff" text-anchor="end"  stroke="#fff">--/--</text>
<text x="303.4" y="654" font-size="10.5" fill="#fff"  textLength="42.8" lengthAdjust="spacing" stroke="#fff">SFC-6km</text>
<text x="472.2" y="654" font-size="10.5" fill="#fff" text-anchor="end"  stroke="#fff">3</text>
<text x="531.2" y="654" font-size="10.5" fill="#fff" text-anchor="end"  stroke="#fff">50/7</text>
<text x="589.3" y="654" font-size="10.5" fill="#fff" text-anchor="end"  stroke="#fff">98/15</text>
<text x="303.4" y="665" font-size="10.5" fill="#fff"  textLength="42.8" lengthAdjust="spacing" stroke="#fff">SFC-8km</text>
<text x="472.2" y="665" font-size="10.5" fill="#fff" text-anchor="end"  stroke="#fff">44</text>
<text x="531.2" y="665" font-size="10.5" fill="#fff" text-anchor="end"  stroke="#fff">50/5</text>
<text x="589.3" y="665" font-size="10.5" fill="#fff" text-anchor="end"  stroke="#fff">106/14</text>
<text x="303.4" y="676" font-size="10.5" fill="#d4960a"  textLength="102.7" lengthAdjust="spacing" stroke="#d4960a">LCL-EL (Cloud Layer)</text>
<text x="472.2" y="676" font-size="10.5" fill="#fff" text-anchor="end"  stroke="#fff">0</text>
<text x="531.2" y="676" font-size="10.5" fill="#d4960a" text-anchor="end"  stroke="#d4960a">78/8</text>
<text x="589.3" y="676" font-size="10.5" fill="#fff" text-anchor="end"  stroke="#fff">108/18</text>
<text x="303.4" y="687" font-size="10.5" fill="#fff"  textLength="87" lengthAdjust="spacing" stroke="#fff">Eff Shear (EBWD)</text>
<text x="472.2" y="687" font-size="10.5" fill="#fff" text-anchor="end"  stroke="#fff">--</text>
<text x="531.2" y="687" font-size="10.5" fill="#fff" text-anchor="end"  stroke="#fff">--/--</text>
<text x="589.3" y="687" font-size="10.5" fill="#fff" text-anchor="end"  stroke="#fff">--/--</text>
<text x="303.4" y="703" font-size="10.5" fill="#fff"  textLength="58.6" lengthAdjust="spacing" stroke="#fff">BRN Shear =</text>
<text x="472.2" y="703" font-size="10.5" fill="#fff" text-anchor="end"  stroke="#fff">12 m2/s2</text>
<text x="303.4" y="714" font-size="10.5" fill="#fff"  textLength="78.8" lengthAdjust="spacing" stroke="#fff">4-6km SR Wind =</text>
<text x="472.2" y="714" font-size="10.5" fill="#fff" text-anchor="end"  stroke="#fff">117/16 kt</text>
<text x="303.4" y="730" font-size="10.5" fill="#fff"  textLength="120.9" lengthAdjust="spacing" stroke="#fff">...Storm Motion Vectors...</text>
<text x="303.4" y="741" font-size="10.5" fill="#f06464"  textLength="71.7" lengthAdjust="spacing" stroke="#f06464">Bunkers Right =</text>
<text x="472.2" y="741" font-size="10.5" fill="#f06464" text-anchor="end"  stroke="#f06464">307/12 kt</text>
<text x="303.4" y="752" font-size="10.5" fill="#1a9fd8"  textLength="65.7" lengthAdjust="spacing" stroke="#1a9fd8">Bunkers Left =</text>
<text x="472.2" y="752" font-size="10.5" fill="#1a9fd8" text-anchor="end"  stroke="#1a9fd8">87/19 kt</text>
<text x="303.4" y="763" font-size="10.5" fill="#fff"  textLength="94.6" lengthAdjust="spacing" stroke="#fff">Corfidi Downshear =</text>
<text x="472.2" y="763" font-size="10.5" fill="#fff" text-anchor="end"  stroke="#fff">209/28 kt</text>
<text x="303.4" y="774" font-size="10.5" fill="#fff"  textLength="80.4" lengthAdjust="spacing" stroke="#fff">Corfidi Upshear =</text>
<text x="472.2" y="774" font-size="10.5" fill="#fff" text-anchor="end"  stroke="#fff">215/22 kt</text>
<text x="531.7" y="763" font-size="10.5" fill="#fff" text-anchor="middle"  textLength="74.6" lengthAdjust="spacing" stroke="#fff">1km &amp; 6km AGL</text>
<text x="531.2" y="774" font-size="10.5" fill="#fff" text-anchor="middle"  textLength="52.5" lengthAdjust="spacing" stroke="#fff">Wind Barbs</text>
<path d="M532.4 724.7L529 700.2 M529 700.2L533.6 699.5" stroke="#00c8d8" stroke-width="1.4" fill="none" stroke-linecap="round"/>
<path d="M532.4 724.7L553.6 711.2 M553.6 711.2L559.5 720.5 M550.2 713.7L552.7 718.4" stroke="#00dd22" stroke-width="1.4" fill="none" stroke-linecap="round"/>
<text x="737.7" y="606.7" font-size="16" fill="#fff" text-anchor="middle"  textLength="260" lengthAdjust="spacing">SARS - Sounding Analogue System</text>
<line x1="591" y1="614.6" x2="884" y2="614.6" stroke="#fff" stroke-width="1.4" />
<line x1="738.6" y1="614.6" x2="738.6" y2="780" stroke="#fff" stroke-width="1.4" />
<text x="664.1" y="630.7" font-size="14" fill="#fff" text-anchor="middle" >SUPERCELL</text>
<text x="810.9" y="630.7" font-size="14" fill="#fff" text-anchor="middle" >SEVERE HAIL</text>
<text x="663.9" y="676.2" font-size="10.5" fill="#f5c81e" text-anchor="middle"  textLength="89.2" lengthAdjust="spacing" stroke="#f5c81e">No Quality Matches</text>
<text x="810.9" y="676.2" font-size="10.5" fill="#f5c81e" text-anchor="middle"  textLength="89.2" lengthAdjust="spacing" stroke="#f5c81e">No Quality Matches</text>
<text x="1030.9" y="602.9" font-size="12.3" fill="#fff" text-anchor="middle"  textLength="167.7" lengthAdjust="spacing" stroke="#fff">Effective Layer STP (with CIN)</text>
<text x="894.6" y="766.2" font-size="10.3" fill="#fff" text-anchor="middle"  stroke="#fff">0</text>
<line x1="886" y1="748.6" x2="1176.5" y2="748.6" stroke="#343434" stroke-width="2" stroke-dasharray="4 2"/>
<text x="894.6" y="752.5" font-size="10.3" fill="#fff" text-anchor="middle"  stroke="#fff">1</text>
<line x1="886" y1="734.9" x2="1176.5" y2="734.9" stroke="#343434" stroke-width="2" stroke-dasharray="4 2"/>
<text x="894.6" y="738.8" font-size="10.3" fill="#fff" text-anchor="middle"  stroke="#fff">2</text>
<line x1="886" y1="721.2" x2="1176.5" y2="721.2" stroke="#343434" stroke-width="2" stroke-dasharray="4 2"/>
<text x="894.6" y="725.1" font-size="10.3" fill="#fff" text-anchor="middle"  stroke="#fff">3</text>
<line x1="886" y1="707.5" x2="1176.5" y2="707.5" stroke="#343434" stroke-width="2" stroke-dasharray="4 2"/>
<text x="894.6" y="711.4" font-size="10.3" fill="#fff" text-anchor="middle"  stroke="#fff">4</text>
<line x1="886" y1="693.8" x2="1176.5" y2="693.8" stroke="#343434" stroke-width="2" stroke-dasharray="4 2"/>
<text x="894.6" y="697.7" font-size="10.3" fill="#fff" text-anchor="middle"  stroke="#fff">5</text>
<line x1="886" y1="680.2" x2="1176.5" y2="680.2" stroke="#343434" stroke-width="2" stroke-dasharray="4 2"/>
<text x="894.6" y="684.1" font-size="10.3" fill="#fff" text-anchor="middle"  stroke="#fff">6</text>
<line x1="886" y1="666.5" x2="1176.5" y2="666.5" stroke="#343434" stroke-width="2" stroke-dasharray="4 2"/>
<text x="894.6" y="670.4" font-size="10.3" fill="#fff" text-anchor="middle"  stroke="#fff">7</text>
<line x1="886" y1="652.8" x2="1176.5" y2="652.8" stroke="#343434" stroke-width="2" stroke-dasharray="4 2"/>
<text x="894.6" y="656.7" font-size="10.3" fill="#fff" text-anchor="middle"  stroke="#fff">8</text>
<line x1="886" y1="639.1" x2="1176.5" y2="639.1" stroke="#343434" stroke-width="2" stroke-dasharray="4 2"/>
<text x="894.6" y="643" font-size="10.3" fill="#fff" text-anchor="middle"  stroke="#fff">9</text>
<line x1="886" y1="625.4" x2="1176.5" y2="625.4" stroke="#343434" stroke-width="2" stroke-dasharray="4 2"/>
<text x="894.6" y="629.3" font-size="10.3" fill="#fff" text-anchor="middle"  stroke="#fff">10</text>
<line x1="886" y1="611.7" x2="1176.5" y2="611.7" stroke="#343434" stroke-width="2" stroke-dasharray="4 2"/>
<text x="894.6" y="615.6" font-size="10.3" fill="#fff" text-anchor="middle"  stroke="#fff">11</text>
<text x="926.7" y="775.7" font-size="10.5" fill="#fff" text-anchor="middle"  stroke="#fff">EF4+</text>
<text x="968.2" y="775.7" font-size="10.5" fill="#fff" text-anchor="middle"  stroke="#fff">EF3</text>
<text x="1010.4" y="775.7" font-size="10.5" fill="#fff" text-anchor="middle"  stroke="#fff">EF2</text>
<text x="1051.1" y="775.7" font-size="10.5" fill="#fff" text-anchor="middle"  stroke="#fff">EF1</text>
<text x="1093.4" y="775.7" font-size="10.5" fill="#fff" text-anchor="middle"  stroke="#fff">EF0</text>
<text x="1135.9" y="775.7" font-size="10.5" fill="#fff" text-anchor="middle"  stroke="#fff">NONTOR</text>
<line x1="926.4" y1="611.1" x2="926.4" y2="648.7" stroke="#ff00ff" stroke-width="2" />
<line x1="926.4" y1="727.3" x2="926.4" y2="746.7" stroke="#ff00ff" stroke-width="2" />
<rect x="915.8" y="648.7" width="21.2" height="78.6" fill="none" stroke="#ff00ff" stroke-width="2" />
<line x1="915.8" y1="689.7" x2="937" y2="689.7" stroke="#ff00ff" stroke-width="2" />
<line x1="968.4" y1="646.1" x2="968.4" y2="700.6" stroke="#ff0000" stroke-width="2" />
<line x1="968.4" y1="749" x2="968.4" y2="760.7" stroke="#ff0000" stroke-width="2" />
<rect x="957.8" y="700.6" width="21.2" height="48.4" fill="none" stroke="#ff0000" stroke-width="2" />
<line x1="957.8" y1="729.6" x2="979" y2="729.6" stroke="#ff0000" stroke-width="2" />
<line x1="1010.5" y1="685" x2="1010.5" y2="711.7" stroke="#ff8c28" stroke-width="2" />
<line x1="1010.5" y1="753.7" x2="1010.5" y2="763" stroke="#ff8c28" stroke-width="2" />
<rect x="999.9" y="711.7" width="21.2" height="42" fill="none" stroke="#ff8c28" stroke-width="2" />
<line x1="999.9" y1="738.9" x2="1021.1" y2="738.9" stroke="#ff8c28" stroke-width="2" />
<line x1="1051.5" y1="699.8" x2="1051.5" y2="727" stroke="#ffff00" stroke-width="2" />
<line x1="1051.5" y1="758.4" x2="1051.5" y2="763" stroke="#ffff00" stroke-width="2" />
<rect x="1040.9" y="727" width="21.2" height="31.4" fill="none" stroke="#ffff00" stroke-width="2" />
<line x1="1040.9" y1="745.2" x2="1062.1" y2="745.2" stroke="#ffff00" stroke-width="2" />
<line x1="1093.5" y1="711.5" x2="1093.5" y2="734.8" stroke="#ffff00" stroke-width="2" />
<line x1="1093.5" y1="760.7" x2="1093.5" y2="763" stroke="#ffff00" stroke-width="2" />
<rect x="1082.9" y="734.8" width="21.2" height="25.9" fill="none" stroke="#ffff00" stroke-width="2" />
<line x1="1082.9" y1="751.6" x2="1104.1" y2="751.6" stroke="#ffff00" stroke-width="2" />
<line x1="1135.7" y1="738.2" x2="1135.7" y2="752.4" stroke="#00ff00" stroke-width="2" />
<line x1="1135.7" y1="762.3" x2="1135.7" y2="763" stroke="#00ff00" stroke-width="2" />
<rect x="1125.1" y="752.4" width="21.2" height="9.9" fill="none" stroke="#00ff00" stroke-width="2" />
<line x1="1125.1" y1="758.9" x2="1146.3" y2="758.9" stroke="#00ff00" stroke-width="2" />
<line x1="885" y1="763" x2="1177" y2="763" stroke="#00d2d2" stroke-width="2" />
<rect x="1030.9" y="612.3" width="142.2" height="84" fill="#000" stroke="#fff" stroke-width="2" />
<line x1="1030" y1="624.6" x2="1174" y2="624.6" stroke="#fff" stroke-width="1.6" />
<text x="1034.3" y="624.1" font-size="10.5" fill="#fff"  textLength="124" lengthAdjust="spacing" stroke="#fff">Prob EF2+ Given Supercell</text>
<text x="1033.8" y="635.6" font-size="10.5" fill="#fff"  textLength="77" lengthAdjust="spacing" stroke="#fff">based on CAPE:</text>
<text x="1137.8" y="635.6" font-size="10.5" fill="#fff"  textLength="14.8" lengthAdjust="spacing" stroke="#fff">0.0</text>
<text x="1033.8" y="646.6" font-size="10.5" fill="#ff4500"  textLength="67.9" lengthAdjust="spacing" stroke="#ff4500">based on LCL:</text>
<text x="1137.8" y="646.6" font-size="10.5" fill="#ff4500"  textLength="20.7" lengthAdjust="spacing" stroke="#ff4500">0.15</text>
<text x="1033.8" y="657.6" font-size="10.5" fill="#fff"  textLength="77" lengthAdjust="spacing" stroke="#fff">based on ESRH:</text>
<text x="1137.8" y="657.6" font-size="10.5" fill="#fff"  textLength="7.5" lengthAdjust="spacing" stroke="#fff">--</text>
<text x="1033.8" y="668.6" font-size="10.5" fill="#fff"  textLength="78.8" lengthAdjust="spacing" stroke="#fff">based on EBWD:</text>
<text x="1137.8" y="668.6" font-size="10.5" fill="#fff"  textLength="7.5" lengthAdjust="spacing" stroke="#fff">--</text>
<text x="1033.8" y="679.6" font-size="10.5" fill="#fff"  textLength="74.9" lengthAdjust="spacing" stroke="#fff">based on STPC:</text>
<text x="1137.8" y="679.6" font-size="10.5" fill="#fff"  textLength="20.7" lengthAdjust="spacing" stroke="#fff">0.06</text>
<text x="1033.8" y="690.6" font-size="10.5" fill="#fff"  textLength="95.7" lengthAdjust="spacing" stroke="#fff">based on STP_fixed:</text>
<text x="1137.8" y="690.6" font-size="10.5" fill="#fff"  textLength="20.7" lengthAdjust="spacing" stroke="#fff">0.05</text>
</svg>
</body></html>
